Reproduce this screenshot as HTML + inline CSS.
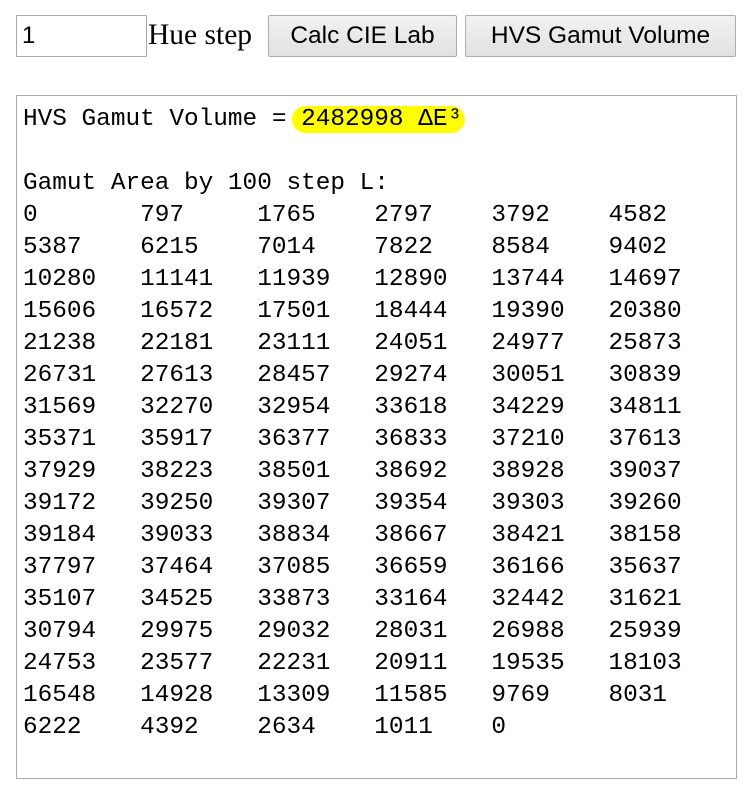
<!DOCTYPE html>
<html><head><meta charset="utf-8"><style>
body{margin:0;background:#fff;width:749px;height:794px;position:relative;overflow:hidden}
.inp{position:absolute;left:16px;top:15px;border:1px solid #a9a9a9;font:24px "Liberation Sans",sans-serif;line-height:40px;padding-left:5px;box-sizing:border-box;width:131px;height:42px}
.lbl{position:absolute;left:148px;top:17px;font:29.5px "Liberation Serif",serif;line-height:36px}
.btn{position:absolute;top:15px;height:42px;border:1px solid #adadad;background:linear-gradient(#f2f2f2,#e1e1e1);font:24.5px "Liberation Sans",sans-serif;line-height:40px;text-align:center;box-sizing:border-box;border-radius:2px}
.ta{position:absolute;left:16px;top:95px;width:721px;height:684px;border:1px solid #a9a9a9;box-sizing:border-box}
pre{position:absolute;left:6px;top:8px;margin:0;font:24.4px "Liberation Mono",monospace;line-height:32px;tab-size:8;-moz-tab-size:8}
.hl{background:#ff0;border-radius:14px;padding:0 3px 0 9px;margin-left:-9px}
</style></head><body>
<div class="inp">1</div>
<div class="lbl">Hue step</div>
<div class="btn" style="left:268px;width:189px">Calc CIE Lab</div>
<div class="btn" style="left:465px;width:271px">HVS Gamut Volume</div>
<div class="ta"><pre>HVS Gamut Volume = <span class="hl">2482998 ΔE³</span>

Gamut Area by 100 step L:
0	797	1765	2797	3792	4582
5387	6215	7014	7822	8584	9402
10280	11141	11939	12890	13744	14697
15606	16572	17501	18444	19390	20380
21238	22181	23111	24051	24977	25873
26731	27613	28457	29274	30051	30839
31569	32270	32954	33618	34229	34811
35371	35917	36377	36833	37210	37613
37929	38223	38501	38692	38928	39037
39172	39250	39307	39354	39303	39260
39184	39033	38834	38667	38421	38158
37797	37464	37085	36659	36166	35637
35107	34525	33873	33164	32442	31621
30794	29975	29032	28031	26988	25939
24753	23577	22231	20911	19535	18103
16548	14928	13309	11585	9769	8031
6222	4392	2634	1011	0</pre></div>
</body></html>
